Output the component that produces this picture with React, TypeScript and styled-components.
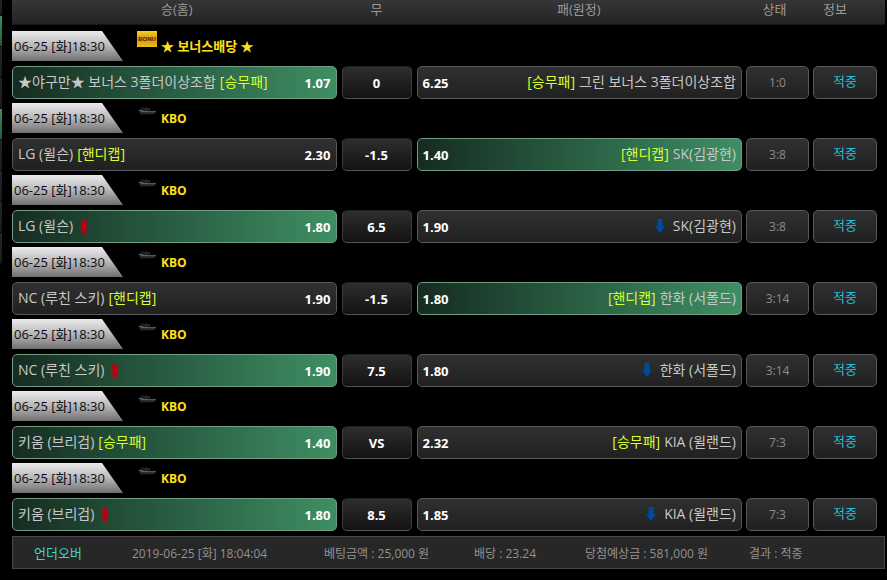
import React from "react";
import styled, { createGlobalStyle, css } from "styled-components";

const GlobalStyle = createGlobalStyle`
  * { box-sizing: border-box; }
  body {
    margin: 0;
    background: #000;
    color: #c8c8c8;
    font-family: "Open Sans", "Noto Sans CJK KR", sans-serif;
    font-size: 13px;
  }
`;

const Page = styled.div`
  display: flex;
  align-items: flex-start;
  gap: 10px;
  padding-right: 2px;
`;

const Rail = styled.aside`
  flex: 0 0 2px;
`;

const RailItem = styled.div<{ $active: boolean; $short?: boolean }>`
  height: ${(p) => (p.$short ? 16 : 31)}px;
  border-bottom: 1px solid #080808;
  background: ${(p) =>
    p.$active
      ? "linear-gradient(#3f8d64, #245a3e)"
      : "linear-gradient(#262626, #1a1a1a)"};
`;

const Main = styled.main`
  flex: 1;
  min-width: 0;
`;

const BetTable = styled.table`
  width: 100%;
  table-layout: fixed;
  border-collapse: separate;
  border-spacing: 0;
`;

const Col = styled.col<{ $width?: number }>`
  ${(p) => p.$width && `width: ${p.$width}px;`}
`;

const HeadCell = styled.th<{ $trail: number }>`
  height: 25px;
  padding: 0 ${(p) => p.$trail}px 5px 0;
  background: linear-gradient(#363636, #232323);
  border-bottom: 1px solid #161616;
  color: #9a9a9a;
  font-weight: 400;
  line-height: 19px;
`;

const GapCell = styled.td`
  height: 2px;
  padding: 0;
`;

const LeagueCell = styled.td`
  padding: 4px 0 5px;
`;

const LeagueLine = styled.div`
  display: flex;
  height: 30px;
`;

const DateTag = styled.time`
  width: 111px;
  padding-left: 2px;
  background: linear-gradient(#ececec, #bdbdbd 45%, #707070);
  clip-path: polygon(0 0, 90px 0, 100% 100%, 0 100%);
  color: #0c0c0c;
  line-height: 31px;
  white-space: nowrap;
`;

const LeagueIcon = styled.svg`
  width: 20px;
  height: 16px;
  margin: 0 4px 0 14px;
`;

const LeagueName = styled.span<{ $bonus?: boolean }>`
  color: #ffe018;
  font-size: ${(p) => (p.$bonus ? 13 : 12)}px;
  font-weight: 700;
  line-height: 31px;
`;

const Cell = styled.td<{ $trail: number }>`
  padding: 0 ${(p) => p.$trail}px 0 0;
`;

const winning = css`
  background: linear-gradient(90deg, #162b21, #235039 35%, #3f8e63);
  border-color: #6f9c83;
`;

const Box = styled.div<{ $win?: boolean }>`
  display: flex;
  align-items: center;
  justify-content: space-between;
  height: 33px;
  padding: 0 5px;
  border: 1px solid #585858;
  border-radius: 5px;
  background: linear-gradient(#303030, #202020);
  font-size: 14px;
  line-height: 30px;
  white-space: nowrap;
  ${(p) => p.$win && winning}
`;

const DrawBox = styled(Box)`
  justify-content: center;
  border-color: #222 #3c3c3c #555;
  background: linear-gradient(#2e2e2e, #121212);
`;

const ScoreBox = styled(Box)`
  justify-content: center;
  color: #8c8c8c;
  font-size: 12px;
`;

const ResultBox = styled(Box)`
  justify-content: center;
  padding-bottom: 3px;
  color: #1cc3df;
  font-size: 13px;
`;

const Team = styled.span`
  display: flex;
  align-items: center;
  gap: 4px;
  padding-bottom: 2px;
`;

const Market = styled.span`
  color: #d8ff2e;
`;

const Odds = styled.strong`
  color: #fff;
  font-size: 13px;
`;

const Arrow = styled.svg`
  width: 10px;
  height: 14px;
  margin: 0 4px 0 2px;
`;

const Summary = styled.footer`
  display: grid;
  grid-template-columns: 98fr 192fr 150fr 111fr 164fr 135fr;
  align-items: center;
  height: 33px;
  margin-top: 5px;
  padding-left: 21px;
  border: 1px solid #484848;
  background: #272727;
  color: #929292;
  font-size: 12px;
  white-space: nowrap;
`;

const BetKind = styled.span`
  color: #3fd5c8;
  font-size: 13px;
`;

const Direction = ({ up }: { up?: boolean }) => (
  <Arrow viewBox="0 0 10 14" aria-label={up ? "오버" : "언더"} role="img">
    {up ? (
      <path d="M5 0 9.5 5.5H7.5V14h-5V5.5H.5Z" fill="#bd0010" />
    ) : (
      <path d="M2.5 0h5v7H10L5 14 0 7h2.5Z" fill="#004b98" />
    )}
  </Arrow>
);

const BonusIcon = () => (
  <LeagueIcon viewBox="0 0 20 16" aria-hidden="true">
    <defs>
      <linearGradient id="gold" x2="0" y2="1">
        <stop offset="0" stopColor="#f5d322" />
        <stop offset=".5" stopColor="#d59412" />
        <stop offset="1" stopColor="#e8c21c" />
      </linearGradient>
    </defs>
    <rect width="20" height="16" fill="url(#gold)" />
    <text
      x="10"
      y="10"
      textAnchor="middle"
      fill="#5b1607"
      fontFamily="'Liberation Sans', sans-serif"
      fontSize="6"
      fontWeight="700"
    >
      BONU
    </text>
  </LeagueIcon>
);

const KboIcon = () => (
  <LeagueIcon viewBox="0 0 20 16" aria-hidden="true">
    <path d="M1 7.5 5 6.5 7 7.5 19 8 17.5 11 4 11.5 2.5 9Z" fill="#222b36" />
    <path d="M1 7.5 5 7l2 1 12 .3-.5 1L5 9Z" fill="#59616b" />
    <path
      d="M3 6.8 6 5l1.5 1L9 4.5 11 6l1.5-.5V7"
      fill="none"
      stroke="#46494e"
      strokeWidth=".8"
    />
    <path d="M6 7.5 9 6l3 1.5Z" fill="#4d3c2c" />
  </LeagueIcon>
);

type Game = {
  home: string;
  away: string;
  market?: string;
  homeOdds: string;
  line: string;
  awayOdds: string;
  winner: "home" | "away";
  score: string;
  bonus?: boolean;
};

const games: Game[] = [
  { home: "★야구만★ 보너스 3폴더이상조합", away: "그린 보너스 3폴더이상조합", market: "[승무패]", homeOdds: "1.07", line: "0", awayOdds: "6.25", winner: "home", score: "1:0", bonus: true },
  { home: "LG (윌슨)", away: "SK(김광현)", market: "[핸디캡]", homeOdds: "2.30", line: "-1.5", awayOdds: "1.40", winner: "away", score: "3:8" },
  { home: "LG (윌슨)", away: "SK(김광현)", homeOdds: "1.80", line: "6.5", awayOdds: "1.90", winner: "home", score: "3:8" },
  { home: "NC (루친 스키)", away: "한화 (서폴드)", market: "[핸디캡]", homeOdds: "1.90", line: "-1.5", awayOdds: "1.80", winner: "away", score: "3:14" },
  { home: "NC (루친 스키)", away: "한화 (서폴드)", homeOdds: "1.90", line: "7.5", awayOdds: "1.80", winner: "home", score: "3:14" },
  { home: "키움 (브리검)", away: "KIA (윌랜드)", market: "[승무패]", homeOdds: "1.40", line: "VS", awayOdds: "2.32", winner: "home", score: "7:3" },
  { home: "키움 (브리검)", away: "KIA (윌랜드)", homeOdds: "1.80", line: "8.5", awayOdds: "1.85", winner: "home", score: "7:3" },
];

const GameRows = ({ game }: { game: Game }) => (
  <>
    <tr>
      <LeagueCell colSpan={5}>
        <LeagueLine>
          <DateTag dateTime="2019-06-25T18:30">06-25 [화]18:30</DateTag>
          {game.bonus ? <BonusIcon /> : <KboIcon />}
          <LeagueName $bonus={game.bonus}>
            {game.bonus ? "★ 보너스배당 ★" : "KBO"}
          </LeagueName>
        </LeagueLine>
      </LeagueCell>
    </tr>
    <tr>
      <Cell $trail={5}>
        <Box $win={game.winner === "home"}>
          <Team>
            {game.home}
            {game.market ? <Market>{game.market}</Market> : <Direction up />}
          </Team>
          <Odds>{game.homeOdds}</Odds>
        </Box>
      </Cell>
      <Cell $trail={5}>
        <DrawBox>
          <Odds>{game.line}</Odds>
        </DrawBox>
      </Cell>
      <Cell $trail={4}>
        <Box $win={game.winner === "away"}>
          <Odds>{game.awayOdds}</Odds>
          <Team>
            {game.market ? <Market>{game.market}</Market> : <Direction />}
            {game.away}
          </Team>
        </Box>
      </Cell>
      <Cell $trail={4}>
        <ScoreBox>{game.score}</ScoreBox>
      </Cell>
      <Cell $trail={8}>
        <ResultBox>적중</ResultBox>
      </Cell>
    </tr>
  </>
);

const railItems = [false, true, false, false, true, false, false, false, false];

export default function App() {
  return (
    <>
      <GlobalStyle />
      <Page>
        <Rail>
          {railItems.map((active, i) => (
            <RailItem key={i} $active={active} $short={i === 0} />
          ))}
        </Rail>
        <Main>
          <BetTable>
            <colgroup>
              <Col />
              <Col $width={75} />
              <Col />
              <Col $width={67} />
              <Col $width={72} />
            </colgroup>
            <thead>
              <tr>
                <HeadCell $trail={0}>승(홈)</HeadCell>
                <HeadCell $trail={5}>무</HeadCell>
                <HeadCell $trail={5}>패(원정)</HeadCell>
                <HeadCell $trail={10}>상태</HeadCell>
                <HeadCell $trail={28}>정보</HeadCell>
              </tr>
            </thead>
            <tbody>
              <tr>
                <GapCell colSpan={5} />
              </tr>
              {games.map((game, i) => (
                <GameRows key={i} game={game} />
              ))}
            </tbody>
          </BetTable>
          <Summary>
            <BetKind>언더오버</BetKind>
            <span>2019-06-25 [화] 18:04:04</span>
            <span>베팅금액 : 25,000 원</span>
            <span>배당 : 23.24</span>
            <span>당첨예상금 : 581,000 원</span>
            <span>결과 : 적중</span>
          </Summary>
        </Main>
      </Page>
    </>
  );
}
